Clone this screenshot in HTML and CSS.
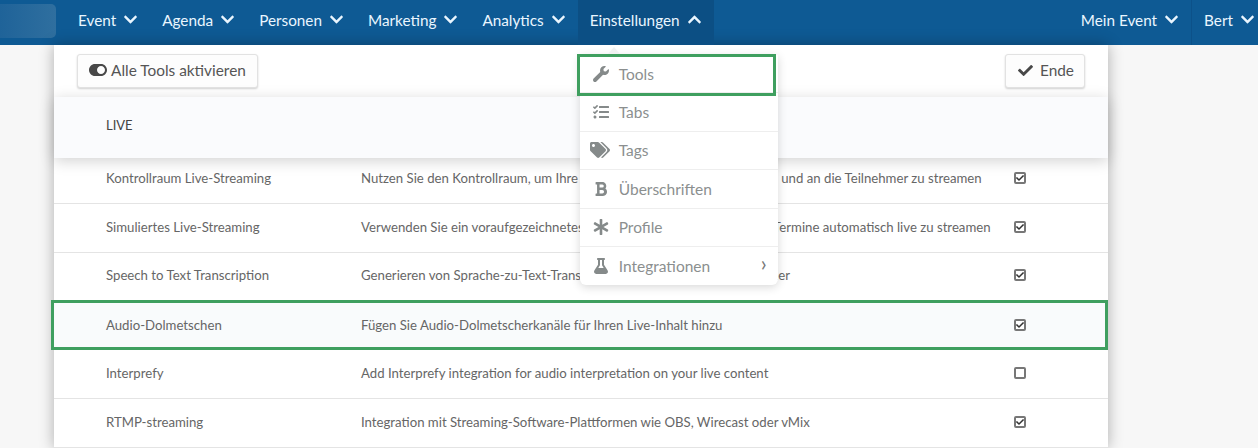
FILE: index.html
```html
<!DOCTYPE html>
<html lang="de">
<head>
  <meta charset="UTF-8">
  <title>Einstellungen - Tools</title>
  <link rel="stylesheet" href="styles.css">
</head>
<body>
  <!-- icon definitions -->
  <svg class="defs" width="0" height="0">
    <symbol id="i-down" viewBox="0 0 448 512"><path d="M207.029 381.476L12.686 187.132c-9.373-9.373-9.373-24.569 0-33.941l22.667-22.667c9.357-9.357 24.522-9.375 33.901-.04L224 284.505l154.745-154.021c9.379-9.335 24.544-9.317 33.901.04l22.667 22.667c9.373 9.373 9.373 24.569 0 33.941L240.971 381.476c-9.373 9.372-24.569 9.372-33.942 0z"/></symbol>
    <symbol id="i-up" viewBox="0 0 448 512"><path d="M240.971 130.524l194.343 194.343c9.373 9.373 9.373 24.569 0 33.941l-22.667 22.667c-9.357 9.357-24.522 9.375-33.901.04L224 227.495 69.255 381.516c-9.379 9.335-24.544 9.317-33.901-.04l-22.667-22.667c-9.373-9.373-9.373-24.569 0-33.941L207.03 130.525c9.372-9.373 24.568-9.373 33.941-.001z"/></symbol>
    <symbol id="i-toggle" viewBox="0 0 576 512"><path d="M384 64H192C86 64 0 150 0 256s86 192 192 192h192c106 0 192-86 192-192S490 64 384 64zm0 320c-70.800 0-128-57.300-128-128 0-70.800 57.300-128 128-128 70.800 0 128 57.300 128 128 0 70.800-57.300 128-128 128z"/></symbol>
    <symbol id="i-check" viewBox="0 0 512 512"><path d="M173.898 439.404l-166.400-166.400c-9.997-9.997-9.997-26.206 0-36.204l36.203-36.204c9.997-9.998 26.207-9.998 36.204 0L192 312.690 432.095 72.596c9.997-9.997 26.207-9.997 36.204 0l36.203 36.204c9.997 9.997 9.997 26.206 0 36.204l-294.400 294.401c-9.998 9.997-26.207 9.997-36.204-.001z"/></symbol>
    <symbol id="i-wrench" viewBox="0 0 512 512"><path d="M507.730 109.100c-2.240-9.030-13.540-12.090-20.120-5.510l-74.360 74.360-67.880-11.310-11.310-67.880 74.360-74.360c6.620-6.620 3.430-17.900-5.660-20.160-47.380-11.740-99.550.910-136.580 37.930-39.640 39.640-50.550 97.100-34.050 147.200L18.740 402.760c-24.990 24.990-24.990 65.510 0 90.500 24.990 24.990 65.510 24.990 90.500 0l213.210-213.210c50.120 16.710 107.470 5.680 147.370-34.220 37.070-37.070 49.700-89.320 37.910-136.730z"/></symbol>
    <symbol id="i-tasks" viewBox="0 0 512 512"><path d="M139.610 35.500a12 12 0 0 0-17 0L58.930 98.810l-22.700-22.120a12 12 0 0 0-17 0L3.530 92.410a12 12 0 0 0 0 17l47.590 47.400a12.780 12.780 0 0 0 17.610 0l15.590-15.620L156.520 69a12.090 12.090 0 0 0 .09-17zm0 159.190a12 12 0 0 0-17 0l-63.680 63.720-22.700-22.100a12 12 0 0 0-17 0L3.530 252a12 12 0 0 0 0 17L51 316.500a12.770 12.770 0 0 0 17.600 0l15.700-15.690 72.200-72.220a12 12 0 0 0 .09-16.900zM64 368c-26.490 0-48.590 21.500-48.590 48S37.530 464 64 464a48 48 0 0 0 0-96zm432 16H208a16 16 0 0 0-16 16v32a16 16 0 0 0 16 16h288a16 16 0 0 0 16-16v-32a16 16 0 0 0-16-16zm0-320H208a16 16 0 0 0-16 16v32a16 16 0 0 0 16 16h288a16 16 0 0 0 16-16V80a16 16 0 0 0-16-16zm0 160H208a16 16 0 0 0-16 16v32a16 16 0 0 0 16 16h288a16 16 0 0 0 16-16v-32a16 16 0 0 0-16-16z"/></symbol>
    <symbol id="i-tags" viewBox="0 0 640 512"><path d="M497.941 225.941L286.059 14.059A48 48 0 0 0 252.118 0H48C21.490 0 0 21.490 0 48v204.118a48 48 0 0 0 14.059 33.941l211.882 211.882c18.744 18.745 49.136 18.746 67.882 0l204.118-204.118c18.745-18.745 18.745-49.137 0-67.882zM112 160c-26.510 0-48-21.490-48-48s21.490-48 48-48 48 21.490 48 48-21.490 48-48 48zm513.941 133.823L421.823 497.941c-18.745 18.745-49.137 18.745-67.882 0l-.360-.360L527.640 323.522c16.999-16.999 26.360-39.600 26.360-63.640s-9.362-46.641-26.360-63.640L331.397 0h48.721a48 48 0 0 1 33.941 14.059l211.882 211.882c18.745 18.745 18.745 49.137 0 67.882z"/></symbol>
    <symbol id="i-bold" viewBox="0 0 384 512"><path d="M333.490 238a122 122 0 0 0 27-65.210C367.870 96.490 308 32 233.420 32H34a16 16 0 0 0-16 16v48a16 16 0 0 0 16 16h31.870v288H34a16 16 0 0 0-16 16v48a16 16 0 0 0 16 16h209.320c70.800 0 134.140-51.750 141-122.400 4.740-48.450-16.390-92.060-50.830-119.600zM145.660 112h87.760a48 48 0 0 1 0 96h-87.760zm87.760 288h-87.760V288h87.760a56 56 0 0 1 0 112z"/></symbol>
    <symbol id="i-asterisk" viewBox="0 0 512 512"><path d="M478.210 334.093L336 256l142.210-78.093c11.795-6.477 15.961-21.384 9.232-33.037l-19.480-33.741c-6.728-11.653-21.720-15.499-33.227-8.523L296 186.718l3.475-162.204C299.763 11.061 288.937 0 275.480 0h-38.960c-13.456 0-24.283 11.061-23.994 24.514L216 186.718 77.265 102.607c-11.506-6.976-26.499-3.130-33.227 8.523l-19.480 33.741c-6.728 11.653-2.562 26.560 9.233 33.037L176 256 33.790 334.093c-11.795 6.477-15.961 21.384-9.232 33.037l19.480 33.741c6.728 11.653 21.721 15.499 33.227 8.523L216 325.282l-3.475 162.204C212.237 500.939 223.064 512 236.520 512h38.961c13.456 0 24.283-11.061 23.995-24.514L296 325.282l138.735 84.111c11.506 6.976 26.499 3.130 33.227-8.523l19.480-33.741c6.728-11.653 2.563-26.559-9.232-33.036z"/></symbol>
    <symbol id="i-flask" viewBox="0 0 448 512"><path d="M437.200 403.500L320 215V64h8c13.300 0 24-10.700 24-24V24c0-13.300-10.700-24-24-24H120c-13.300 0-24 10.700-24 24v16c0 13.300 10.700 24 24 24h8v151L10.800 403.500C-18.500 450.600 15.300 512 70.900 512h306.200c55.700 0 89.400-61.500 60.100-108.500zM137.900 320l48.200-77.600c3.700-5.200 5.800-11.600 5.800-18.400V64h64v160c0 6.900 2.200 13.200 5.800 18.400l48.200 77.600h-172z"/></symbol>
  </svg>

  <!-- top navigation -->
  <header class="topbar">
    <div class="logo"></div>
    <nav class="nav">
      <a class="nav-item">Event <svg class="chev"><use href="#i-down"/></svg></a>
      <a class="nav-item">Agenda <svg class="chev"><use href="#i-down"/></svg></a>
      <a class="nav-item">Personen <svg class="chev"><use href="#i-down"/></svg></a>
      <a class="nav-item">Marketing <svg class="chev"><use href="#i-down"/></svg></a>
      <a class="nav-item">Analytics <svg class="chev"><use href="#i-down"/></svg></a>
      <div class="nav-drop">
        <a class="nav-item active">Einstellungen <svg class="chev"><use href="#i-up"/></svg></a>
        <ul class="menu">
          <li class="menu-item marked"><svg class="menu-icon"><use href="#i-wrench"/></svg>Tools</li>
          <li class="menu-item"><svg class="menu-icon"><use href="#i-tasks"/></svg>Tabs</li>
          <li class="menu-item"><svg class="menu-icon wide"><use href="#i-tags"/></svg>Tags</li>
          <li class="menu-item"><svg class="menu-icon"><use href="#i-bold"/></svg>Überschriften</li>
          <li class="menu-item"><svg class="menu-icon"><use href="#i-asterisk"/></svg>Profile</li>
          <li class="menu-item"><svg class="menu-icon"><use href="#i-flask"/></svg>Integrationen<span class="menu-arrow">›</span></li>
        </ul>
      </div>
    </nav>
    <div class="nav-right">
      <a class="nav-item event">Mein Event <svg class="chev"><use href="#i-down"/></svg></a>
      <a class="nav-item user">Bert <svg class="chev"><use href="#i-down"/></svg></a>
    </div>
  </header>

  <main class="panel">
    <div class="toolbar">
      <button class="btn"><svg class="btn-icon toggle"><use href="#i-toggle"/></svg>Alle Tools aktivieren</button>
      <button class="btn end"><svg class="btn-icon"><use href="#i-check"/></svg>Ende</button>
    </div>

    <div class="group-head">LIVE</div>

    <div class="row first">
      <span class="name">Kontrollraum Live-Streaming</span>
      <span class="desc">Nutzen Sie den Kontrollraum, um Ihre Live-Inhalte zu steuern, zu sichten und an die Teilnehmer zu streamen</span>
      <span class="box on"><svg><use href="#i-check"/></svg></span>
    </div>
    <div class="row">
      <span class="name">Simuliertes Live-Streaming</span>
      <span class="desc">Verwenden Sie ein voraufgezeichnetes Video, um Ihre Inhalte zu festen Termine automatisch live zu streamen</span>
      <span class="box on"><svg><use href="#i-check"/></svg></span>
    </div>
    <div class="row">
      <span class="name">Speech to Text Transcription</span>
      <span class="desc">Generieren von Sprache-zu-Text-Transkriptionen für Ihre Event-Teilnehmer</span>
      <span class="box on"><svg><use href="#i-check"/></svg></span>
    </div>
    <div class="row marked">
      <span class="name">Audio-Dolmetschen</span>
      <span class="desc">Fügen Sie Audio-Dolmetscherkanäle für Ihren Live-Inhalt hinzu</span>
      <span class="box on"><svg><use href="#i-check"/></svg></span>
    </div>
    <div class="row">
      <span class="name">Interprefy</span>
      <span class="desc">Add Interprefy integration for audio interpretation on your live content</span>
      <span class="box"></span>
    </div>
    <div class="row">
      <span class="name">RTMP-streaming</span>
      <span class="desc">Integration mit Streaming-Software-Plattformen wie OBS, Wirecast oder vMix</span>
      <span class="box on"><svg><use href="#i-check"/></svg></span>
    </div>
  </main>
</body>
</html>
```

FILE: styles.css
```css
*, *::before, *::after {
  box-sizing: border-box;
}

html, body {
  margin: 0;
  height: 448px;
  overflow: hidden;
}

body {
  background-color: #f7f7f7;
  font-family: Lato, sans-serif;
  color: #555;
}

.defs {
  position: absolute;
}

/* top bar */
.topbar {
  display: flex;
  height: 45px;
  background-color: #0e5a94;
  color: #eaf6ff;
  font-size: 15.300px;
}

.logo {
  width: 56px;
  height: 34px;
  margin-top: 4px;
  margin-right: 10px;
  border-radius: 0 5px 5px 0;
  background: linear-gradient(to right, #1f6399, #2f6f9f);
}

.nav {
  display: flex;
}

.nav-item {
  display: flex;
  align-items: center;
  gap: 7px;
  height: 45px;
  padding: 0 12px 6px;
  white-space: nowrap;
}

.chev {
  width: 15px;
  height: 15px;
  fill: #eaf6ff;
}

.nav-drop {
  position: relative;
  z-index: 5;
}

.nav-item.active {
  background-color: #0c4f84;
}

.nav-right {
  display: flex;
  margin-left: auto;
}

.nav-item.user {
  padding: 0 3px 6px 12px;
  border-left: 1px solid #0c5189;
}

/* dropdown */
.menu {
  position: absolute;
  top: 55px;
  left: 2px;
  width: 198px;
  margin: 0;
  padding: 0;
  list-style: none;
  background-color: #fff;
  border-radius: 0 0 6px 6px;
  box-shadow: 0 2px 10px rgba(0, 0, 0, 0.16);
  color: #8b8f8f;
}

/* small tip under the active menu entry */
.menu::before {
  content: "";
  position: absolute;
  top: -8px;
  left: 27px;
  border-left: 7px solid transparent;
  border-right: 7px solid transparent;
  border-bottom: 8px solid #f0f1f1;
}

.menu-item {
  position: relative;
  display: flex;
  align-items: center;
  height: 38.400px;
  padding-left: 13px;
  font-size: 15.500px;
  color: #8b8f8f;
  border-bottom: 1px solid #eee;
}

.menu-item:last-child {
  border-bottom: none;
}

.menu-icon {
  flex: none;
  width: 16px;
  height: 16px;
  margin-right: 10px;
  fill: #858a8a;
}

.menu-icon.wide {
  width: 20px;
  margin-left: -3px;
  margin-right: 9px;
}

.menu-arrow {
  position: absolute;
  right: 11px;
  top: 3px;
  font-size: 21px;
  color: #777;
}

.menu-item.marked::after {
  content: "";
  position: absolute;
  top: -1px;
  left: -3px;
  width: 199px;
  height: 42px;
  border: 3px solid #3f9f5f;
}

/* main panel */
.panel {
  position: relative;
  width: 1054px;
  height: 403px;
  margin-left: 54px;
  background-color: #fff;
  box-shadow: 0 0 14px rgba(0, 0, 0, 0.3);
}

.toolbar {
  display: flex;
  justify-content: space-between;
  align-items: flex-start;
  height: 52px;
  padding: 9px 23px 0 23px;
}

.btn {
  display: flex;
  align-items: center;
  gap: 4px;
  height: 34px;
  padding: 0 11px 2px;
  border: 1px solid #e2e2e2;
  border-radius: 3px;
  background-color: #fdfdfd;
  box-shadow: 0 1px 2px rgba(0, 0, 0, 0.18);
  font-family: inherit;
  font-size: 15.400px;
  color: #555;
}

.btn.end {
  gap: 7px;
  padding: 0 10px 2px 12px;
}

.btn-icon {
  width: 15px;
  height: 15px;
  fill: #484848;
}

.btn-icon.toggle {
  width: 18px;
  height: 16px;
}

.group-head {
  position: relative;
  z-index: 1;
  display: flex;
  align-items: center;
  height: 61px;
  padding: 0 0 6px 52px;
  font-size: 13px;
  color: #444;
  background-color: #fafbfd;
  box-shadow: 0 3px 14px rgba(0, 0, 0, 0.18);
}

.row {
  position: relative;
  display: flex;
  align-items: center;
  height: 48.800px;
  padding: 0 0 2px 52px;
  border-bottom: 1px solid #e4e4e4;
  font-size: 13.200px;
  color: #666;
  white-space: nowrap;
}

.row.first {
  margin-top: -3px;
}

.name {
  flex: none;
  width: 255px;
}

.desc {
  flex: none;
  width: 653px;
}

.box {
  flex: none;
  display: flex;
  align-items: center;
  justify-content: center;
  width: 12px;
  height: 12px;
  border: 2px solid #777;
  border-radius: 2px;
  background-color: #fff;
}

.box svg {
  width: 8px;
  height: 8px;
  fill: #333;
}

.row.marked {
  background-color: #f9fbfc;
  border-bottom: none;
}

.row.marked::after {
  content: "";
  position: absolute;
  top: -1px;
  left: -3px;
  right: 0;
  bottom: 0;
  border: 3px solid #3f9f5f;
}
```
